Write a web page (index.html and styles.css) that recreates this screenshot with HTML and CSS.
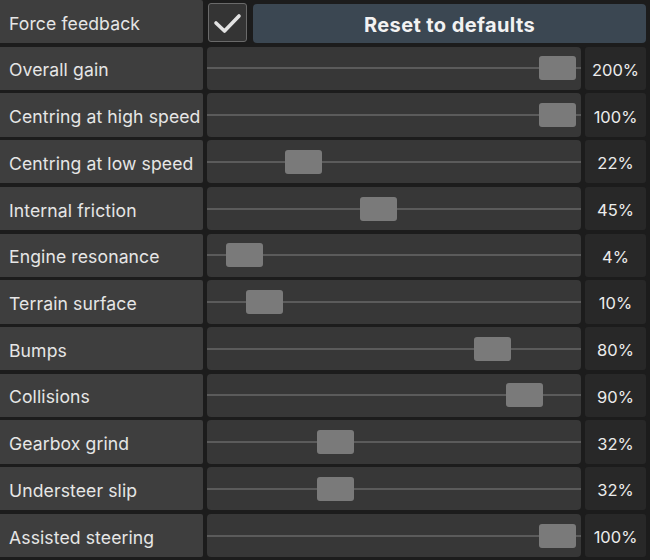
FILE: index.html
```html
<!DOCTYPE html>
<html>
<head>
<meta charset="utf-8">
<link rel="stylesheet" href="styles.css">
</head>
<body>
<div class="panel">
  <div class="label">Force feedback</div>
  <div class="toprow">
    <div class="checkbox">
      <svg width="39" height="39" viewBox="0 0 39 39"><polyline points="8,20 16.5,28 31,13" fill="none" stroke="#e2e2e2" stroke-width="3.6" stroke-linecap="round" stroke-linejoin="round"/></svg>
    </div>
    <div class="button">Reset to defaults</div>
  </div>

  <div class="label">Overall gain</div>
  <div class="slider"><div class="track"></div><div class="thumb" style="left:326px"></div></div>
  <div class="value">200%</div>

  <div class="label">Centring at high speed</div>
  <div class="slider"><div class="track"></div><div class="thumb" style="left:326px"></div></div>
  <div class="value">100%</div>

  <div class="label">Centring at low speed</div>
  <div class="slider"><div class="track"></div><div class="thumb" style="left:71.7px"></div></div>
  <div class="value">22%</div>

  <div class="label">Internal friction</div>
  <div class="slider"><div class="track"></div><div class="thumb" style="left:146.7px"></div></div>
  <div class="value">45%</div>

  <div class="label">Engine resonance</div>
  <div class="slider"><div class="track"></div><div class="thumb" style="left:13px"></div></div>
  <div class="value">4%</div>

  <div class="label">Terrain surface</div>
  <div class="slider"><div class="track"></div><div class="thumb" style="left:32.6px"></div></div>
  <div class="value">10%</div>

  <div class="label">Bumps</div>
  <div class="slider"><div class="track"></div><div class="thumb" style="left:260.8px"></div></div>
  <div class="value">80%</div>

  <div class="label">Collisions</div>
  <div class="slider"><div class="track"></div><div class="thumb" style="left:293.4px"></div></div>
  <div class="value">90%</div>

  <div class="label">Gearbox grind</div>
  <div class="slider"><div class="track"></div><div class="thumb" style="left:104.3px"></div></div>
  <div class="value">32%</div>

  <div class="label">Understeer slip</div>
  <div class="slider"><div class="track"></div><div class="thumb" style="left:104.3px"></div></div>
  <div class="value">32%</div>

  <div class="label">Assisted steering</div>
  <div class="slider"><div class="track"></div><div class="thumb" style="left:326px"></div></div>
  <div class="value">100%</div>
</div>
</body>
</html>
```
FILE: styles.css
```css
html, body {
  margin: 0;
  padding: 0;
  background: #1c1c1c;
}
body {
  width: 650px;
  height: 560px;
  overflow: hidden;
  font-family: Inter, "Noto Sans", sans-serif;
}
.panel {
  display: grid;
  grid-template-columns: 203px 374px 61px;
  grid-auto-rows: 43.3px;
  column-gap: 4px;
  row-gap: 3.43px;
  padding-right: 4px;
}
.label {
  background: #3e3e3e;
  color: #e6e6e6;
  font-size: 17.6px;
  letter-spacing: 0.1px;
  display: flex;
  align-items: center;
  padding-left: 9px;
  padding-top: 3px;
  box-sizing: border-box;
  border-radius: 0 2px 2px 0;
  white-space: nowrap;
}
.toprow {
  grid-column: 2 / 4;
  display: flex;
  align-items: center;
  padding-left: 1px;
  gap: 6px;
}
.checkbox {
  width: 37px;
  height: 37px;
  border: 1px solid #6a6a6a;
  border-radius: 3px;
  background: #343434;
  display: flex;
  align-items: center;
  justify-content: center;
  margin-top: 2px;
}
.checkbox svg {
  display: block;
  flex: none;
}
.button {
  flex: 1;
  height: 39px;
  margin-top: 4px;
  padding-top: 2px;
  box-sizing: border-box;
  background: #3b4752;
  border-radius: 4px;
  color: #f2f2f2;
  font-weight: 700;
  font-size: 20px;
  letter-spacing: 0.4px;
  display: flex;
  align-items: center;
  justify-content: center;
}
.slider {
  position: relative;
  background: #373737;
  border-radius: 4px;
}
.track {
  position: absolute;
  left: 0;
  right: 0;
  top: 50%;
  height: 2px;
  margin-top: -1px;
  background: #5b5b5b;
}
.thumb {
  position: absolute;
  top: 50%;
  margin-top: -12px;
  margin-left: 6px;
  width: 37px;
  height: 24px;
  background: #7a7a7a;
  border-radius: 3px;
}
.value {
  background: #282828;
  border-radius: 3px;
  color: #ececec;
  font-size: 16.5px;
  padding-top: 3px;
  box-sizing: border-box;
  display: flex;
  align-items: center;
  justify-content: center;
}
```
